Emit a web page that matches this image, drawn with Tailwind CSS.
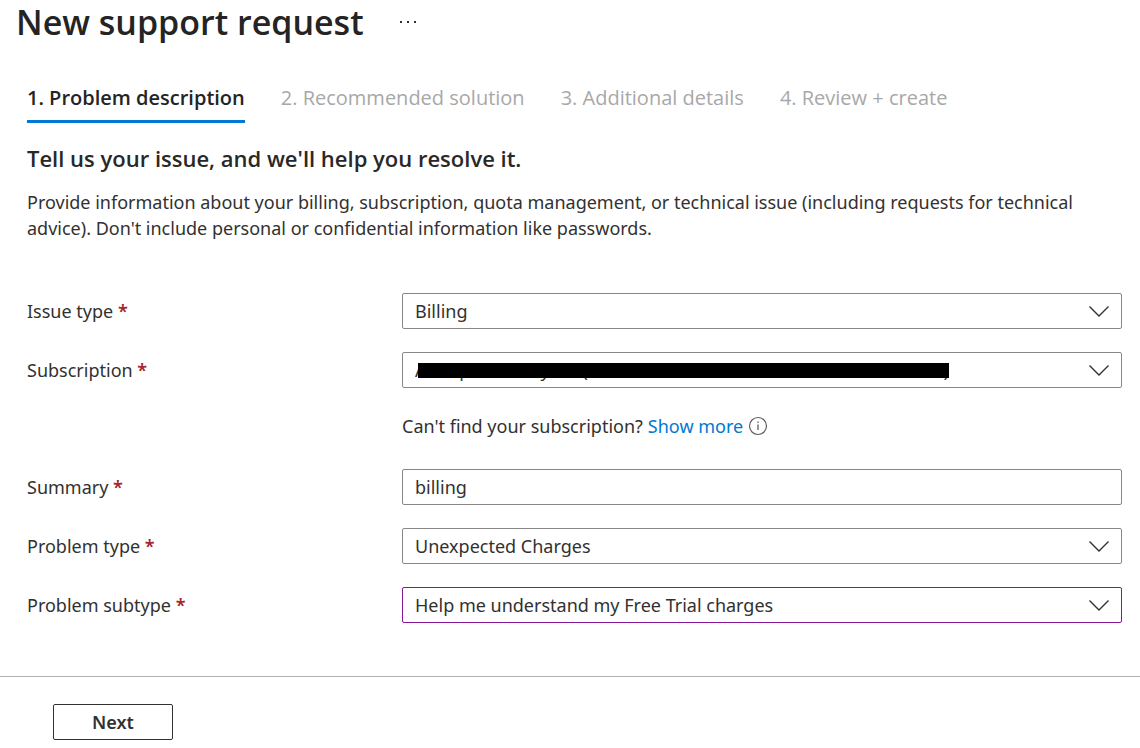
<!DOCTYPE html>
<html lang="en">

<head>
  <meta charset="UTF-8">
  <meta name="viewport" content="width=device-width, initial-scale=1.0">
  <title>New support request</title>
  <script src="https://cdn.jsdelivr.net/npm/@tailwindcss/browser@4"></script>
</head>

<body class="min-h-screen bg-white font-['Segoe_UI','Noto_Sans',sans-serif] text-lg text-[#323130]">
  <header class="flex items-center gap-9 px-4">
    <h1 class="font-['Segoe_UI','Open_Sans',sans-serif] text-[34px] leading-11 font-semibold text-[#242424]">New support request</h1>
    <button type="button" aria-label="More actions">
      <svg class="w-4 h-4" viewBox="0 0 16 16" fill="#323130">
        <rect x="0" y="7" width="2" height="2" />
        <rect x="7" y="7" width="2" height="2" />
        <rect x="14" y="7" width="2" height="2" />
      </svg>
    </button>
  </header>

  <main class="pl-[27px] pr-[18px] pt-8">
    <nav class="flex gap-9 font-['Segoe_UI','Open_Sans',sans-serif] text-xl text-[#a8a8a8]">
      <button type="button" class="h-[47px] border-b-3 border-[#0078d4] font-semibold text-[#242424]">1. Problem description</button>
      <button type="button" class="h-[47px] border-b-3 border-transparent" disabled>2. Recommended solution</button>
      <button type="button" class="h-[47px] border-b-3 border-transparent" disabled>3. Additional details</button>
      <button type="button" class="h-[47px] border-b-3 border-transparent" disabled>4. Review + create</button>
    </nav>

    <h2 class="mt-[19px] font-['Segoe_UI','Open_Sans',sans-serif] text-[22px] leading-8 font-semibold text-[#292827]">Tell us your issue, and we'll help you resolve it.</h2>
    <p class="mt-[15px] leading-[26px]">Provide information about your billing, subscription, quota management, or technical issue (including requests for technical advice). Don't include personal or confidential information like passwords.</p>

    <form id="supportForm" class="mt-[52px] flex flex-col gap-[23px]">
      <div class="flex items-center">
        <label class="w-[375px] shrink-0" for="issueType">Issue type <span class="font-semibold text-[#a4262c]">*</span></label>
        <div class="relative grow">
          <select id="issueType" class="w-full h-9 px-3 appearance-none bg-white border border-[#8a8886] rounded-xs">
            <option>Billing</option>
          </select>
          <svg class="absolute right-3 top-3 w-[22px] h-3 pointer-events-none" viewBox="0 0 22 12" fill="none" stroke="#323130" stroke-width="1.4">
            <path d="M1.5 1.5 11 11l9.5-9.5" />
          </svg>
        </div>
      </div>

      <div class="flex items-center">
        <label class="w-[375px] shrink-0" for="subscription">Subscription <span class="font-semibold text-[#a4262c]">*</span></label>
        <div class="relative grow">
          <select id="subscription" class="w-full h-9 px-3 appearance-none bg-white border border-[#8a8886] rounded-xs">
            <option>A&nbsp;&nbsp;&nbsp;&nbsp;&nbsp;&nbsp;&nbsp;p&nbsp;&nbsp;&nbsp;&nbsp;&nbsp;&nbsp;&nbsp;&nbsp;&nbsp;&nbsp;&nbsp;&nbsp;&nbsp;&nbsp;&nbsp;y&nbsp;&nbsp;&nbsp;&nbsp;&nbsp;&nbsp;&nbsp;(&nbsp;&nbsp;&nbsp;&nbsp;&nbsp;&nbsp;&nbsp;&nbsp;&nbsp;&nbsp;&nbsp;&nbsp;&nbsp;&nbsp;&nbsp;&nbsp;&nbsp;&nbsp;&nbsp;&nbsp;&nbsp;&nbsp;&nbsp;&nbsp;&nbsp;&nbsp;&nbsp;&nbsp;&nbsp;&nbsp;&nbsp;&nbsp;&nbsp;&nbsp;&nbsp;&nbsp;&nbsp;&nbsp;&nbsp;&nbsp;&nbsp;&nbsp;&nbsp;&nbsp;&nbsp;&nbsp;&nbsp;&nbsp;&nbsp;&nbsp;&nbsp;&nbsp;&nbsp;&nbsp;&nbsp;&nbsp;&nbsp;&nbsp;&nbsp;&nbsp;&nbsp;&nbsp;&nbsp;&nbsp;&nbsp;&nbsp;&nbsp;&nbsp;&nbsp;&nbsp;&nbsp;&nbsp;&nbsp;&nbsp;&nbsp;&nbsp;)</option>
          </select>
          <!-- redacted subscription name -->
          <div class="absolute left-4 top-[11px] w-[531px] h-[15px] bg-black"></div>
          <svg class="absolute right-3 top-3 w-[22px] h-3 pointer-events-none" viewBox="0 0 22 12" fill="none" stroke="#323130" stroke-width="1.4">
            <path d="M1.5 1.5 11 11l9.5-9.5" />
          </svg>
        </div>
      </div>

      <div class="flex items-start gap-[5px] pl-[375px] h-[34px] mt-px">
        <span>Can't find your subscription?</span>
        <a href="#" class="text-[#0078d4]">Show more</a>
        <svg class="w-5 h-5 mt-1" viewBox="0 0 20 20" fill="none" stroke="#605e5c">
          <circle cx="10" cy="10" r="8.5" stroke-width="1.2" />
          <path d="M10 8.5V14M10 5.5V7" stroke-width="1.3" />
        </svg>
      </div>

      <div class="flex items-center">
        <label class="w-[375px] shrink-0" for="summary">Summary <span class="font-semibold text-[#a4262c]">*</span></label>
        <input type="text" id="summary" value="billing" class="grow h-9 px-3 bg-white border border-[#8a8886] rounded-xs">
      </div>

      <div class="flex items-center">
        <label class="w-[375px] shrink-0" for="problemType">Problem type <span class="font-semibold text-[#a4262c]">*</span></label>
        <div class="relative grow">
          <select id="problemType" class="w-full h-9 px-3 appearance-none bg-white border border-[#8a8886] rounded-xs">
            <option>Unexpected Charges</option>
          </select>
          <svg class="absolute right-3 top-3 w-[22px] h-3 pointer-events-none" viewBox="0 0 22 12" fill="none" stroke="#323130" stroke-width="1.4">
            <path d="M1.5 1.5 11 11l9.5-9.5" />
          </svg>
        </div>
      </div>

      <div class="flex items-center">
        <label class="w-[375px] shrink-0" for="problemSubtype">Problem subtype <span class="font-semibold text-[#a4262c]">*</span></label>
        <div class="relative grow">
          <select id="problemSubtype" class="w-full h-9 px-3 appearance-none bg-white border border-[#881798] rounded-xs">
            <option>Help me understand my Free Trial charges</option>
          </select>
          <svg class="absolute right-3 top-3 w-[22px] h-3 pointer-events-none" viewBox="0 0 22 12" fill="none" stroke="#323130" stroke-width="1.4">
            <path d="M1.5 1.5 11 11l9.5-9.5" />
          </svg>
        </div>
      </div>
    </form>
  </main>

  <footer class="mt-[53px] pt-[27px] pb-2 pl-[53px] border-t border-[#b3b0ad]">
    <button type="submit" form="supportForm" class="block w-[120px] h-9 border border-[#323130] rounded-xs font-semibold">Next</button>
  </footer>
</body>

</html>
